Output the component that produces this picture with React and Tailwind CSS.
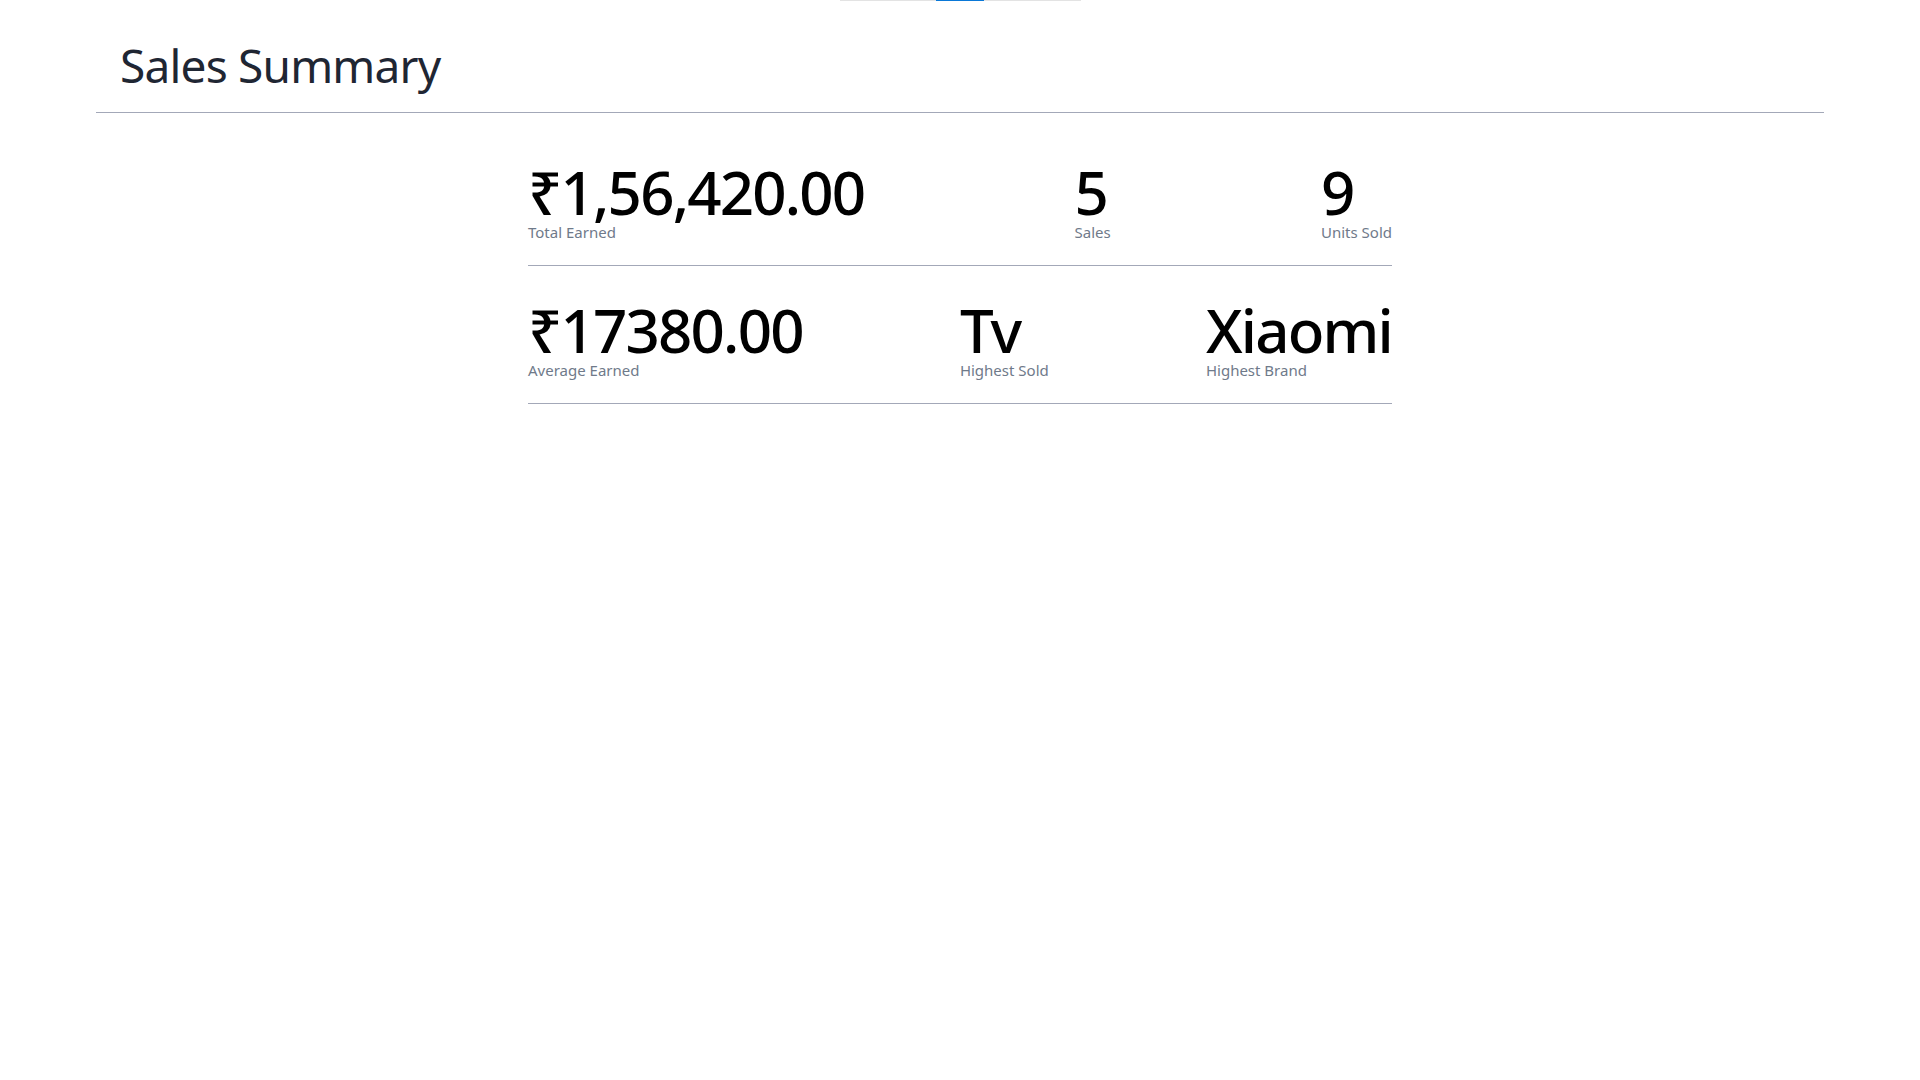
export default function App() {
    const rows = [
        [
            { value: '₹1,56,420.00', label: 'Total Earned' },
            { value: '5', label: 'Sales' },
            { value: '9', label: 'Units Sold' },
        ],
        [
            { value: '₹17380.00', label: 'Average Earned' },
            { value: 'Tv', label: 'Highest Sold' },
            { value: 'Xiaomi', label: 'Highest Brand' },
        ],
    ];

    return (
        <div className="min-h-screen bg-white font-['Noto_Sans',sans-serif]">
            {/* top tab indicator */}
            <div className="flex justify-center">
                <div className="w-[241px] h-px bg-[#e3e3e3]">
                    <div className="ml-[96px] w-[48px] h-px bg-[#0a78d7]" />
                </div>
            </div>

            <div className="w-[90%] mx-auto">
                <div className="pt-[41px] pb-[24px] pl-6 border-b border-[#a3a8b8]">
                    <h1 className="text-[46px] leading-none tracking-[-0.8px] text-[#1f2633]">Sales Summary</h1>
                </div>

                <div className="w-1/2 mx-auto mt-[15px]">
                    {rows.map((row, i) => (
                        <div key={i} className="flex justify-between pt-[34px] pb-[23px] border-b border-[#a3a8b8]">
                            {row.map((s) => (
                                <div key={s.label} className="flex flex-col">
                                    <span className="text-[60px] leading-none font-medium tracking-[-1.8px] text-black">{s.value}</span>
                                    <span className="text-[15px] leading-5 text-[#6f7a8a]">{s.label}</span>
                                </div>
                            ))}
                        </div>
                    ))}
                </div>
            </div>
        </div>
    );
}
